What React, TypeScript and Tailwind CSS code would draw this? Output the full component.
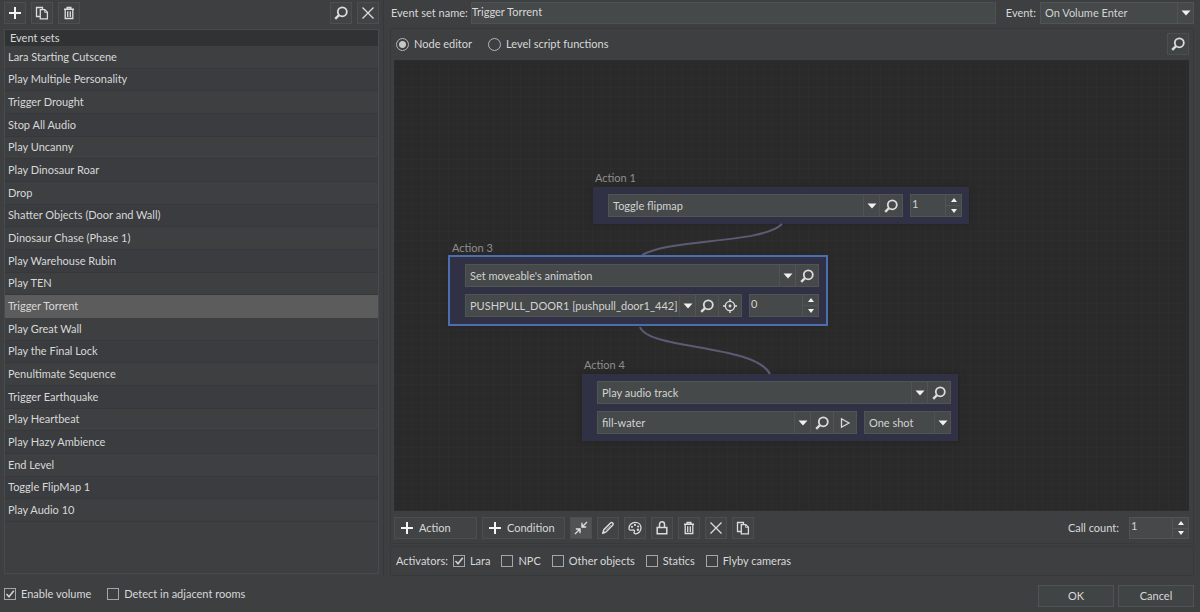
import { useState, type ReactNode } from "react";
import clsx from "clsx";

const EVENT_SETS = [
  "Lara Starting Cutscene",
  "Play Multiple Personality",
  "Trigger Drought",
  "Stop All Audio",
  "Play Uncanny",
  "Play Dinosaur Roar",
  "Drop",
  "Shatter Objects (Door and Wall)",
  "Dinosaur Chase (Phase 1)",
  "Play Warehouse Rubin",
  "Play TEN",
  "Trigger Torrent",
  "Play Great Wall",
  "Play the Final Lock",
  "Penultimate Sequence",
  "Trigger Earthquake",
  "Play Heartbeat",
  "Play Hazy Ambience",
  "End Level",
  "Toggle FlipMap 1",
  "Play Audio 10",
];

const ACTIVATORS = ["Lara", "NPC", "Other objects", "Statics", "Flyby cameras"];

/* ---------- icons ---------- */

function Icon({ children, width = 2 }: { children: ReactNode; width?: number }) {
  return (
    <svg
      viewBox="0 0 16 16"
      className="size-4 shrink-0"
      fill="none"
      stroke="#dcdcdc"
      strokeWidth={width}
      aria-hidden="true"
    >
      {children}
    </svg>
  );
}

const PlusIcon = () => (
  <Icon>
    <path d="M8 2v12M2 8h12" stroke="#f4f4f4" />
  </Icon>
);

const CopyIcon = () => (
  <Icon width={1.3}>
    <path d="M6 11.500H2.500v-9h6V4" />
    <path d="M6.300 4.600h4.500l2.600 2.600v6.600H6.300z" />
    <path d="M10.600 4.800v2.600h2.600" strokeWidth={0.8} />
  </Icon>
);

const TrashIcon = () => (
  <Icon width={1.3}>
    <path d="M3 4.200h10M6.200 4V2.600h3.600V4" strokeWidth={1.5} />
    <path d="M4.200 4.500v9h7.600v-9M6.700 6.200v5.800M9.300 6.200v5.800" />
  </Icon>
);

const SearchIcon = () => (
  <Icon width={1.8}>
    <circle cx="9.300" cy="6.800" r="4.500" />
    <path d="M6 10.100 2.200 13.900" strokeWidth={2.4} />
  </Icon>
);

const CloseIcon = () => (
  <Icon width={1.3}>
    <path d="m2.500 2.500 11 11M13.500 2.500l-11 11" />
  </Icon>
);

const CollapseIcon = () => (
  <Icon width={1.3}>
    <path d="M14 2 9.500 6.500M2 14l4.500-4.500" />
    <path d="M9 2.800V7h4.200M2.800 9H7v4.200" />
    <path d="M9 4.500V7h2.500zM4.500 9H7v2.500z" fill="#dcdcdc" strokeWidth={0.6} />
  </Icon>
);

const PencilIcon = () => (
  <Icon width={1.4}>
    <path d="m3 13 .8-3.300 6.700-6.700c.7-.7 1.600-.6 2.200 0s.7 1.500 0 2.200L6 11.900z" />
    <path d="m2.400 13.600 2.800-.7-2-2z" fill="#dcdcdc" strokeWidth={0.5} />
    <path d="m5.800 10 5-5" strokeWidth={0.6} />
  </Icon>
);

const PaletteIcon = () => (
  <Icon width={1.3}>
    <path d="M2 8.500C2 4.800 4.800 2.300 8.300 2.300c3.400 0 5.700 2.400 5.700 5.500 0 3.200-2.400 6-5.500 6-1.700 0-1.700-1.200-1.200-2.100.5-1-.1-1.800-1.300-1.700C4.200 10.200 2 10.700 2 8.500z" />
    <g fill="#dcdcdc" stroke="none">
      <circle cx="5" cy="6.800" r="1.100" />
      <circle cx="8" cy="4.900" r="1.100" />
      <circle cx="11.100" cy="6.500" r="1.100" />
      <circle cx="10.900" cy="9.700" r="1.200" />
    </g>
  </Icon>
);

const LockIcon = () => (
  <Icon width={1.5}>
    <path d="M3.200 7.500h9.600v6.300H3.200zM5.500 7.200V4.500C5.500 2.900 6.600 1.800 8 1.800s2.500 1.100 2.500 2.700v2.700" />
  </Icon>
);

const TargetIcon = () => (
  <Icon width={1.4}>
    <circle cx="8" cy="8" r="4.600" />
    <circle cx="8" cy="8" r="1.400" fill="#dcdcdc" stroke="none" />
    <path d="M8 1v3M8 12v3M1 8h3M12 8h3" />
  </Icon>
);

const PlayIcon = () => (
  <Icon width={1.3}>
    <path d="M4.500 3.800v8.400L12 8z" />
  </Icon>
);

/* ---------- controls ---------- */

function IconButton({
  label,
  active,
  children,
}: {
  label: string;
  active?: boolean;
  children: ReactNode;
}) {
  return (
    <button
      type="button"
      aria-label={label}
      className={clsx(
        "flex size-[22px] shrink-0 items-center justify-center border border-[#4b4f50]",
        active ? "bg-[#505354]" : "bg-[#414445]"
      )}
    >
      {children}
    </button>
  );
}

function Combo({
  label,
  value,
  id,
  className,
}: {
  label: string;
  value: string;
  id?: string;
  className?: string;
}) {
  return (
    <div className={clsx("relative min-w-0", className)}>
      <select
        id={id}
        aria-label={id ? undefined : label}
        defaultValue={value}
        className="block h-full w-full appearance-none border border-[#505454] bg-[#454949] pr-4 pl-1 text-[#d2d2d2] outline-none"
      >
        <option>{value}</option>
      </select>
      <span className="pointer-events-none absolute inset-y-0 right-0 flex w-[17px] items-center justify-center border-l border-[#4f5353]">
        <svg viewBox="0 0 10 6" className="h-[6px] w-[10px]" aria-hidden="true">
          <path d="M0.500 0.500h9L5 5.500z" fill="#f0f0f0" />
        </svg>
      </span>
    </div>
  );
}

function Spinner({
  label,
  value,
  id,
  className,
}: {
  label: string;
  value: number;
  id?: string;
  className?: string;
}) {
  const [current, setCurrent] = useState(value);
  return (
    <div className={clsx("flex border border-[#505454] bg-[#454949]", className)}>
      <input
        id={id}
        type="number"
        aria-label={id ? undefined : label}
        value={current}
        onChange={(e) => setCurrent(Number(e.target.value))}
        className="w-full min-w-0 flex-1 appearance-none bg-transparent pb-1 pl-px text-[#d2d2d2] outline-none [-moz-appearance:textfield] [&::-webkit-inner-spin-button]:appearance-none"
      />
      <div className="flex w-4 flex-col border-l border-[#505454]">
        <button
          type="button"
          aria-label={`${label} up`}
          onClick={() => setCurrent(current + 1)}
          className="flex flex-1 items-center justify-center border-b border-[#505454]"
        >
          <svg viewBox="0 0 6 4" className="h-1 w-1.5" aria-hidden="true">
            <path d="M0 4h6L3 0z" fill="#f0f0f0" />
          </svg>
        </button>
        <button
          type="button"
          aria-label={`${label} down`}
          onClick={() => setCurrent(current - 1)}
          className="flex flex-1 items-center justify-center"
        >
          <svg viewBox="0 0 6 4" className="h-1 w-1.5" aria-hidden="true">
            <path d="M0 0h6L3 4z" fill="#f0f0f0" />
          </svg>
        </button>
      </div>
    </div>
  );
}

function CheckBox({ label, checked }: { label: string; checked?: boolean }) {
  return (
    <label className="flex items-center gap-[5px]">
      <span className="relative size-3">
        <input
          type="checkbox"
          defaultChecked={checked}
          className="peer block size-3 appearance-none border border-[#a4a6a7]"
        />
        <svg
          viewBox="0 0 12 12"
          className="pointer-events-none absolute inset-0 hidden size-3 peer-checked:block"
          fill="none"
          stroke="#d0d0d0"
          strokeWidth="1.600"
          aria-hidden="true"
        >
          <path d="M2.500 6 5 8.800 9.800 2.800" />
        </svg>
      </span>
      {label}
    </label>
  );
}

function Radio({ label, checked }: { label: string; checked?: boolean }) {
  return (
    <label className="flex items-center gap-[5px]">
      <input
        type="radio"
        name="mode"
        defaultChecked={checked}
        className="size-[13px] appearance-none rounded-full border border-[#b4b6b7] checked:bg-[radial-gradient(circle,#c4c6c7_3px,transparent_4px)]"
      />
      {label}
    </label>
  );
}

/* A node placed freely on the canvas, with its caption above the body. */
function Node({
  title,
  className,
  selected,
  children,
}: {
  title: string;
  className: string;
  selected?: boolean;
  children: ReactNode;
}) {
  return (
    <section className={clsx("absolute", className)}>
      <h2 className="pl-0.5 leading-[18px] text-[#8e8e8e]">{title}</h2>
      <div
        className={clsx(
          "flex flex-col gap-[7px] bg-[#303145] py-[7px] pr-[7px] pl-[15px] shadow-[0_0_6px_#222]",
          selected && "outline-2 outline-[#4c6eaf]"
        )}
      >
        {children}
      </div>
    </section>
  );
}

function NodeButton({ label, children }: { label: string; children: ReactNode }) {
  return (
    <button
      type="button"
      aria-label={label}
      className="flex w-[23px] shrink-0 items-center justify-center border border-l-0 border-[#505454] bg-[#454949]"
    >
      {children}
    </button>
  );
}

function Canvas() {
  return (
    <div className="relative min-h-[451px] flex-1 overflow-hidden bg-[#2a2a2a] bg-[linear-gradient(#2d2d2d_1px,transparent_1px),linear-gradient(90deg,#2d2d2d_1px,transparent_1px)] bg-size-[9px_9px]">
      <Node title="Action 1" className="top-[109px] left-[199px] w-[376px]">
        <div className="flex h-[23px]">
          <Combo label="Action 1 function" value="Toggle flipmap" className="flex-1" />
          <NodeButton label="Find function">
            <SearchIcon />
          </NodeButton>
          <Spinner label="Flipmap" value={1} className="ml-[7px] w-[52px]" />
        </div>
      </Node>

      <Node title="Action 3" selected className="top-[179px] left-[56px] w-[376px]">
        <div className="flex h-[23px]">
          <Combo label="Action 3 function" value="Set moveable's animation" className="flex-1" />
          <NodeButton label="Find function">
            <SearchIcon />
          </NodeButton>
        </div>
        <div className="flex h-[23px]">
          <Combo
            label="Moveable"
            value="PUSHPULL_DOOR1 [pushpull_door1_442]"
            className="flex-1"
          />
          <NodeButton label="Find moveable">
            <SearchIcon />
          </NodeButton>
          <NodeButton label="Locate moveable">
            <TargetIcon />
          </NodeButton>
          <Spinner label="Animation" value={0} className="ml-[7px] w-[70px]" />
        </div>
      </Node>

      <Node title="Action 4" className="top-[296px] left-[188px] w-[376px]">
        <div className="flex h-[23px]">
          <Combo label="Action 4 function" value="Play audio track" className="flex-1" />
          <NodeButton label="Find function">
            <SearchIcon />
          </NodeButton>
        </div>
        <div className="flex h-[23px]">
          <Combo label="Track" value="fill-water" className="flex-1" />
          <NodeButton label="Find track">
            <SearchIcon />
          </NodeButton>
          <NodeButton label="Play track">
            <PlayIcon />
          </NodeButton>
          <Combo label="Playback" value="One shot" className="ml-[7px] w-[87px]" />
        </div>
      </Node>

      {/* links between the nodes */}
      <svg
        viewBox="0 0 794 451"
        className="pointer-events-none absolute top-0 left-0 h-[451px] w-[794px]"
        fill="none"
        stroke="#5b5b75"
        strokeWidth="2"
        aria-hidden="true"
      >
        <path d="M388 164C368 184 278 178 248 195" />
        <path d="M246 267C254 290 360 284 376 314" />
      </svg>
    </div>
  );
}

export default function App() {
  const [selected, setSelected] = useState("Trigger Torrent");

  return (
    <div className="flex min-h-screen flex-col bg-[#3d3f41] font-[Lato,'Open_Sans',sans-serif] text-[11px] leading-4 text-[#d8d8d8]">
      <div className="flex flex-1">
        {/* event set list */}
        <aside className="flex w-[384px] shrink-0 flex-col border-r border-[#36393b] px-1 pt-0.5">
          <div className="flex gap-[5px]">
            <IconButton label="Add event set">
              <PlusIcon />
            </IconButton>
            <IconButton label="Copy event set">
              <CopyIcon />
            </IconButton>
            <IconButton label="Delete event set">
              <TrashIcon />
            </IconButton>
            <div className="flex-1" />
            <IconButton label="Search">
              <SearchIcon />
            </IconButton>
            <IconButton label="Clear search">
              <CloseIcon />
            </IconButton>
          </div>

          <div className="mt-[5px] mb-0.5 flex flex-1 flex-col border border-[#484b4d]">
            <h1 className="h-4 bg-[#303233] pl-[5px]">Event sets</h1>
            <ul className="grid h-[476px] auto-rows-fr">
              {EVENT_SETS.map((name) => (
                <li key={name} className="flex even:bg-[#3a3c3f]">
                  <button
                    type="button"
                    onClick={() => setSelected(name)}
                    className={clsx(
                      "flex-1 border-b pl-[3px] text-left",
                      name === selected
                        ? "border-[#5c5c5c] bg-[#5c5c5c]"
                        : "border-[#36393b]"
                    )}
                  >
                    {name}
                  </button>
                </li>
              ))}
            </ul>
          </div>
        </aside>

        {/* event editor */}
        <main className="flex min-w-0 flex-1 flex-col px-1.5 pt-0.5">
          <div className="flex h-[22px] items-center">
            <label htmlFor="set-name" className="mr-[3px] ml-px">
              Event set name:
            </label>
            <input
              id="set-name"
              defaultValue="Trigger Torrent"
              className="h-[22px] min-w-0 flex-1 border border-[#4d5152] bg-[#454949] pb-1 outline-none"
            />
            <label htmlFor="event" className="mr-1 ml-2.5">
              Event:
            </label>
            <Combo id="event" label="Event" value="On Volume Enter" className="h-[22px] w-[154px]" />
          </div>

          <div className="mt-1 flex flex-1 flex-col border border-[#37393b] py-1 pr-1 pl-[3px]">
            <div className="mb-[5px] flex items-center gap-4 pl-0.5">
              <Radio label="Node editor" checked />
              <Radio label="Level script functions" />
              <div className="flex-1" />
              <IconButton label="Search nodes">
                <SearchIcon />
              </IconButton>
            </div>

            <Canvas />

            <div className="mt-1.5 flex h-[22px] gap-[5px]">
              <button
                type="button"
                className="flex w-[83px] items-center gap-1 border border-[#4b4f50] bg-[#414445] pl-1"
              >
                <PlusIcon />
                Action
              </button>
              <button
                type="button"
                className="flex w-[83px] items-center gap-1 border border-[#4b4f50] bg-[#414445] pl-1"
              >
                <PlusIcon />
                Condition
              </button>
              <IconButton label="Shrink node" active>
                <CollapseIcon />
              </IconButton>
              <IconButton label="Rename node">
                <PencilIcon />
              </IconButton>
              <IconButton label="Node color">
                <PaletteIcon />
              </IconButton>
              <IconButton label="Lock node">
                <LockIcon />
              </IconButton>
              <IconButton label="Delete node">
                <TrashIcon />
              </IconButton>
              <IconButton label="Clear nodes">
                <CloseIcon />
              </IconButton>
              <IconButton label="Copy nodes">
                <CopyIcon />
              </IconButton>
              <div className="flex-1" />
              <label htmlFor="call-count" className="mr-[5px] self-center">
                Call count:
              </label>
              <Spinner id="call-count" label="Call count" value={1} className="w-[60px]" />
            </div>
          </div>

          <fieldset className="mt-0.5 flex items-center gap-[11px] border border-[#37393b] py-1.5 pl-[5px]">
            <div className="-mr-1.5">Activators:</div>
            {ACTIVATORS.map((name) => (
              <CheckBox key={name} label={name} checked={name === "Lara"} />
            ))}
          </fieldset>
        </main>
      </div>

      <footer className="flex h-9 items-center gap-4 pr-1.5 pl-1">
        <CheckBox label="Enable volume" checked />
        <CheckBox label="Detect in adjacent rooms" />
        <div className="flex-1" />
        <div className="flex gap-1 pt-1">
          <button type="button" className="h-[22px] w-[76px] border border-[#505355] bg-[#414445]">
            OK
          </button>
          <button type="button" className="h-[22px] w-[76px] border border-[#505355] bg-[#414445]">
            Cancel
          </button>
        </div>
      </footer>
    </div>
  );
}
